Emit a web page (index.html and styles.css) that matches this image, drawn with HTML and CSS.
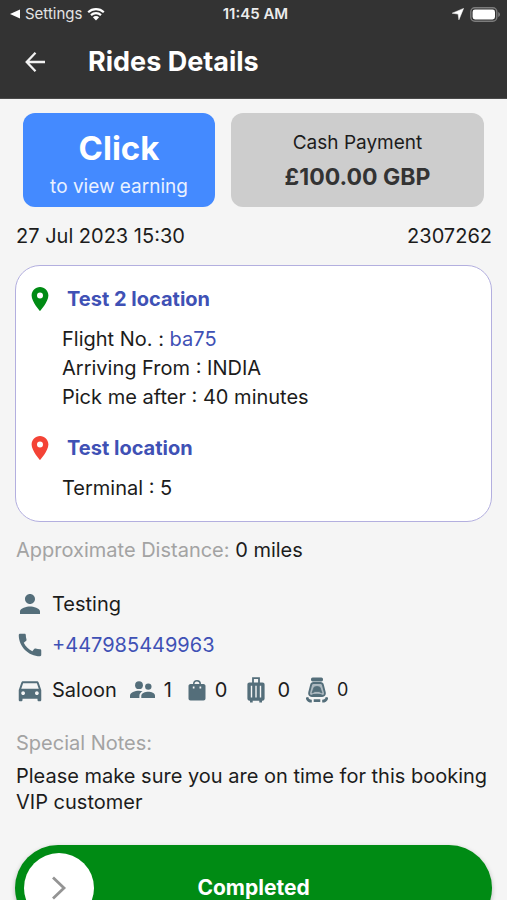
FILE: index.html
```html
<!DOCTYPE html>
<html lang="en">
<head>
<meta charset="utf-8">
<meta name="viewport" content="width=device-width, initial-scale=1">
<title>Rides Details</title>
<link rel="stylesheet" href="styles.css">
</head>
<body>
<div class="app">
  <header class="top">
    <div class="status">
      <div class="status-left">
        <svg class="back-mark" viewBox="0 0 10 10" aria-hidden="true"><path d="M0 5 10 0.5v9z"/></svg>
        <span class="status-app">Settings</span>
        <svg class="wifi" viewBox="0 0 18 14" aria-hidden="true"><path d="M1.2 5.2a11.2 11.2 0 0 1 15.6 0M4 8.1a7.2 7.2 0 0 1 10 0" fill="none" stroke="currentColor" stroke-width="2.2"/><path d="M9 13.4 5.9 10.3a4.4 4.4 0 0 1 6.2 0z"/></svg>
      </div>
      <span class="clock">11:45 AM</span>
      <div class="status-right">
        <svg class="nav-arrow" viewBox="0 0 12 12" aria-hidden="true"><path d="M11.6.4 6.900 11.800 6.100 6.100.2 5.200z" stroke="currentColor" stroke-width=".5"/></svg>
        <svg class="battery" viewBox="0 0 31 15" aria-hidden="true"><rect x=".8" y=".8" width="26" height="13.4" rx="4" fill="none" stroke="#7c7c7c" stroke-width="1.400"/><rect x="2.6" y="2.6" width="22.4" height="9.8" rx="2.4"/><path d="M28.2 5v5c1.1-.4 1.8-1.400 1.800-2.500s-.7-2.100-1.800-2.500z" fill="#7c7c7c"/></svg>
      </div>
    </div>
    <div class="bar">
      <button class="back" type="button" aria-label="Back">
        <svg viewBox="0 0 22 22" aria-hidden="true"><path d="M21 11H3M11.500 1.700 2.700 11l8.800 9.300" fill="none" stroke="currentColor" stroke-width="2.300"/></svg>
      </button>
      <h1>Rides Details</h1>
    </div>
  </header>

  <main class="content">
    <div class="tiles">
      <button class="tile earning" type="button">
        <span class="click">Click</span>
        <span class="hint">to view earning</span>
      </button>
      <div class="tile payment">
        <span class="method">Cash Payment</span>
        <strong class="amount">£100.00 GBP</strong>
      </div>
    </div>

    <div class="meta"><span>27 Jul 2023 15:30</span><span>2307262</span></div>

    <section class="route">
      <div class="stop">
        <svg class="pin pin-start" viewBox="5 2 14 20" aria-hidden="true"><path d="M12 2C8.130 2 5 5.130 5 9c0 5.250 7 13 7 13s7-7.750 7-13c0-3.870-3.130-7-7-7zm0 9.500a2.500 2.500 0 0 1 0-5 2.500 2.500 0 0 1 0 5z"/></svg>
        <h2>Test 2 location</h2>
      </div>
      <div class="info">
        <p>Flight No. : <a href="#flight">ba75</a></p>
        <p>Arriving From : INDIA</p>
        <p>Pick me after : 40 minutes</p>
      </div>
      <div class="stop">
        <svg class="pin pin-end" viewBox="5 2 14 20" aria-hidden="true"><path d="M12 2C8.130 2 5 5.130 5 9c0 5.250 7 13 7 13s7-7.750 7-13c0-3.870-3.130-7-7-7zm0 9.500a2.500 2.500 0 0 1 0-5 2.500 2.500 0 0 1 0 5z"/></svg>
        <h2>Test location</h2>
      </div>
      <div class="info">
        <p>Terminal : 5</p>
      </div>
    </section>

    <p class="distance"><span class="label">Approximate Distance:</span> 0 miles</p>

    <div class="line person">
      <svg class="icon" viewBox="0 0 24 24" aria-hidden="true"><path d="M12 12c2.210 0 4-1.790 4-4s-1.790-4-4-4-4 1.790-4 4 1.790 4 4 4zm0 2c-2.670 0-8 1.340-8 4v2h16v-2c0-2.660-5.330-4-8-4z"/></svg>
      <span>Testing</span>
    </div>
    <div class="line phone">
      <svg class="icon" viewBox="0 0 24 24" aria-hidden="true"><path d="M20.010 15.380c-1.230 0-2.420-.2-3.530-.56a.977.977 0 0 0-1.010.24l-1.570 1.970c-2.830-1.350-5.480-3.900-6.890-6.830l1.950-1.660c.27-.28.350-.67.240-1.020-.37-1.110-.56-2.300-.56-3.530 0-.54-.45-.99-.99-.99H4.190C3.650 3 3 3.240 3 3.990 3 13.280 10.730 21 20.010 21c.71 0 .99-.63.99-1.180v-3.450c0-.54-.45-.99-.99-.99z"/></svg>
      <a href="tel:+447985449963">+447985449963</a>
    </div>
    <div class="line vehicle">
      <svg class="icon" viewBox="0 0 24 24" aria-hidden="true"><path d="M18.920 6.010C18.720 5.420 18.160 5 17.500 5h-11c-.66 0-1.210.42-1.420 1.010L3 12v8c0 .55.450 1 1 1h1c.55 0 1-.45 1-1v-1h12v1c0 .55.450 1 1 1h1c.55 0 1-.45 1-1v-8l-2.080-5.990zM6.500 16c-.83 0-1.500-.67-1.500-1.500S5.670 13 6.500 13s1.500.67 1.500 1.500S7.330 16 6.500 16zm11 0c-.83 0-1.500-.67-1.500-1.500s.67-1.500 1.500-1.500 1.500.67 1.500 1.500-.67 1.500-1.500 1.500zM5 11l1.500-4.500h11L19 11H5z"/></svg>
      <span class="model">Saloon</span>
      <span class="count">
        <svg class="people" viewBox="0 0 25 18" aria-hidden="true"><circle cx="9" cy="4.200" r="3.900"/><circle cx="18.300" cy="5.600" r="3.200"/><path d="M0 17v-2.200c0-3.300 5-5 9-5 1.300 0 2.500.2 3.600.5-1.900 1-3.200 2.500-3.200 4.500V17z"/><path d="M11.300 17v-2.200c0-2.600 4-4 7-4s6.700 1.400 6.700 4V17z"/></svg>1</span>
      <span class="count">
        <svg class="bag" viewBox="0 0 18 22" aria-hidden="true"><path d="M15.500 5H13a4 4 0 0 0-8 0H2.500C1.200 5 .5 6 .5 7v12.500c0 1.200.8 2 2 2h13c1.200 0 2-.8 2-2V7c0-1-.7-2-2-2zM6.500 9.500h-1.700V7.500h1.700zm0-4.500a2.500 2.500 0 0 1 5 0zm1.700 0" fill-rule="evenodd"/><path d="M11.500 7.500h1.700v2h-1.700z" fill="#f5f5f5"/></svg>0</span>
      <span class="count wide">
        <svg class="case" viewBox="0 0 18 26" aria-hidden="true"><path d="M6 6V1.200h6V6" fill="none" stroke="currentColor" stroke-width="1.800"/><path d="M2.500 5.500h13c1.300 0 2.100.9 2.100 2.100v14c0 1.200-.8 2.100-2.100 2.100H15v1.700h-2.700v-1.700H5.700v1.700H3v-1.700h-.5c-1.300 0-2.100-.9-2.100-2.100v-14c0-1.200.8-2.100 2.100-2.100zM3.800 8.700v11.800h1.400V8.700zm4.500 0v11.800h1.400V8.700zm4.500 0v11.800h1.400V8.700z" fill-rule="evenodd"/></svg>0</span>
      <span class="count seats">
        <svg class="seat" viewBox="0 0 22 26" aria-hidden="true"><rect x="5" y=".6" width="12" height="3.800" rx="1.600"/><path d="M7.500 6h7c1.500 0 2.100.7 2.400 2l1.900 7.500c.5 2-.7 3.500-2.600 3.500H5.800c-1.900 0-3.100-1.500-2.600-3.500L5.100 8c.3-1.300.9-2 2.400-2z" fill="#aeb9c0" stroke="currentColor" stroke-width="1.900"/><path d="M8 10.300c1.900-1.200 4.100-1.200 6 0l2 5.700-3-1.500H9L6 16z" stroke="currentColor" stroke-width=".8"/><path d="M5.500 18.500c2-1.500 9-1.500 11 0" fill="none" stroke="currentColor" stroke-width="1.500"/><path d="M1 20.300c.4 2.700 2.300 3.900 4.800 3.900M21 20.300c-.4 2.700-2.300 3.900-4.800 3.900M7.700 23.700h6.600" fill="none" stroke="currentColor" stroke-width="2.700"/></svg>0</span>
    </div>

    <section class="notes">
      <p class="label">Special Notes:</p>
      <p>Please make sure you are on time for this booking<br>VIP customer</p>
    </section>

    <button class="slide" type="button">
      <span class="knob"><svg viewBox="0 0 16 24" aria-hidden="true"><path d="M2 1.500 13 12 2 22.500" fill="none" stroke="#949494" stroke-width="2.800"/></svg></span>
      <span class="slide-text">Completed</span>
    </button>
  </main>
</div>
</body>
</html>
```

FILE: styles.css
```css
* { box-sizing: border-box; }

body {
  margin: 0;
  background: #f5f5f5;
  color: #1c1c1c;
  font-family: Inter, "Liberation Sans", sans-serif;
  font-size: 20px;
  line-height: 26px;
}

h1, h2, p { margin: 0; }
a { color: #3f51b5; text-decoration: none; }
button { border: 0; padding: 0; font: inherit; cursor: pointer; }
svg { display: block; flex: none; fill: currentColor; }

.app {
  display: flex;
  flex-direction: column;
  height: 100vh;
}

.top {
  flex: none;
  background: #333;
  color: #fff;
  border-bottom: 1px solid #4a4a4a;
}

.status {
  display: grid;
  grid-template-columns: 1fr auto 1fr;
  align-items: center;
  height: 28px;
  padding: 0 6px 0 10px;
  font-size: 15px;
  line-height: 20px;
}
.status-left, .status-right { display: flex; align-items: center; }
.status-left { gap: 5px; }
.status-right { gap: 6px; justify-content: flex-end; }
.status-app { color: #e4e4e4; }
.clock { color: #ececec; font-weight: 600; }
.back-mark { width: 10px; height: 10px; }
.wifi { width: 18px; height: 14px; }
.nav-arrow { width: 12px; height: 12px; }
.battery { width: 31px; height: 15px; }

.bar {
  display: flex;
  align-items: center;
  gap: 42px;
  height: 70px;
  padding: 0 24px 2px;
}
.back {
  width: 22px;
  background: none;
  color: #f2f2f2;
}
.bar h1 { font-size: 27px; line-height: 32px; font-weight: 700; }

.content {
  flex: 1;
  min-height: 0;
  padding: 14px 15px 16px;
  overflow-y: auto;
  scrollbar-width: none;
}

.tiles {
  display: grid;
  grid-template-columns: 192fr 253fr;
  gap: 16px;
  padding: 0 8px;
}
.tile {
  display: flex;
  flex-direction: column;
  align-items: center;
  justify-content: center;
  height: 94px;
  border-radius: 12px;
}
.earning { padding-top: 10px; background: #448aff; color: #fff; }
.click { font-size: 33px; line-height: 44px; font-weight: 700; }
.hint { font-size: 19px; line-height: 34px; color: #e9f1ff; }
.payment { background: #cdcdcd; }
.method { font-size: 19px; line-height: 34px; }
.amount { font-size: 23px; line-height: 34px; font-weight: 700; color: #333; }

.meta {
  display: flex;
  justify-content: space-between;
  padding: 16px 0 0 1px;
}

.route {
  margin-top: 16px;
  padding: 19px 15px 18px;
  background: #fff;
  border: 1px solid #b3afdf;
  border-radius: 25px;
}
.stop { display: flex; align-items: center; gap: 18px; }
.stop h2 {
  font-size: 20px;
  line-height: 28px;
  font-weight: 700;
  color: #3f51b5;
}
.pin { width: 18px; height: 24px; }
.pin-start { color: #008b14; }
.pin-end { color: #f44336; }
.info { padding: 12px 0 0 31px; line-height: 29px; }
.info + .stop { margin-top: 22px; }

.label { color: #a3a3a3; }
.distance { margin-top: 15px; padding-left: 1px; }

.line {
  display: flex;
  align-items: center;
  gap: 7px;
  color: #1c1c1c;
}
.line svg { color: #546e7a; }
.icon { width: 30px; height: 30px; }
.person { margin-top: 26px; }
.phone { margin-top: 11px; }
.vehicle { margin-top: 15px; }
.model { margin-right: 6px; }
.count { display: flex; align-items: center; gap: 9px; margin-right: 9px; }
.people { width: 25px; height: 18px; }
.bag { width: 18px; height: 22px; }
.case { width: 18px; height: 26px; }
.seat { width: 22px; height: 26px; }
.wide { gap: 12px; margin-left: 4px; }
.seats { font-size: 18px; }

.notes { margin-top: 25px; padding-left: 1px; }
.notes .label { margin-bottom: 7px; }

.slide {
  display: grid;
  grid-template-columns: 70px 1fr 70px;
  align-items: center;
  width: 100%;
  height: 86px;
  margin-top: 30px;
  padding: 0 9px;
  border-radius: 43px;
  background: #008b14;
  color: #fff;
  box-shadow: 0 2px 5px rgb(0 0 0 / 25%);
}
.knob {
  display: grid;
  place-items: center;
  width: 70px;
  height: 70px;
  border-radius: 50%;
  background: #fff;
}
.knob svg { width: 16px; height: 24px; }
.slide-text { font-size: 21px; font-weight: 700; }
```
